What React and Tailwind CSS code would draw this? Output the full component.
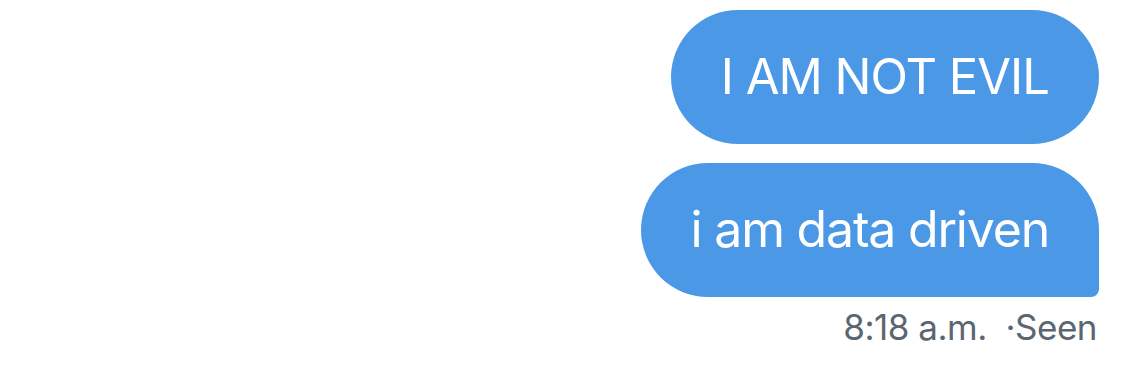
export default function App() {
  return (
    <div className="w-[1125px] h-[374px] bg-white flex flex-col items-end pt-[10px] pr-[26px]" style={{ fontFamily: 'Inter, "Noto Sans", sans-serif' }}>
      <div className="h-[134px] px-[50px] pb-[2px] flex items-center rounded-full bg-[#4b99e6] text-white text-[49px] leading-none tracking-[-1px]">
        I AM NOT EVIL
      </div>
      <div className="mt-[19px] h-[134px] px-[50px] pb-[2px] flex items-center rounded-l-[67px] rounded-tr-[67px] rounded-br-[8px] bg-[#4b99e6] text-white text-[50px] leading-none tracking-[-1.2px]">
        i am data driven
      </div>
      <div className="mt-[13px] pr-[2px] text-[#5b6671] text-[35px] leading-none tracking-[-0.5px]">
        8:18 a.m. &nbsp;·Seen
      </div>
    </div>
  );
}
